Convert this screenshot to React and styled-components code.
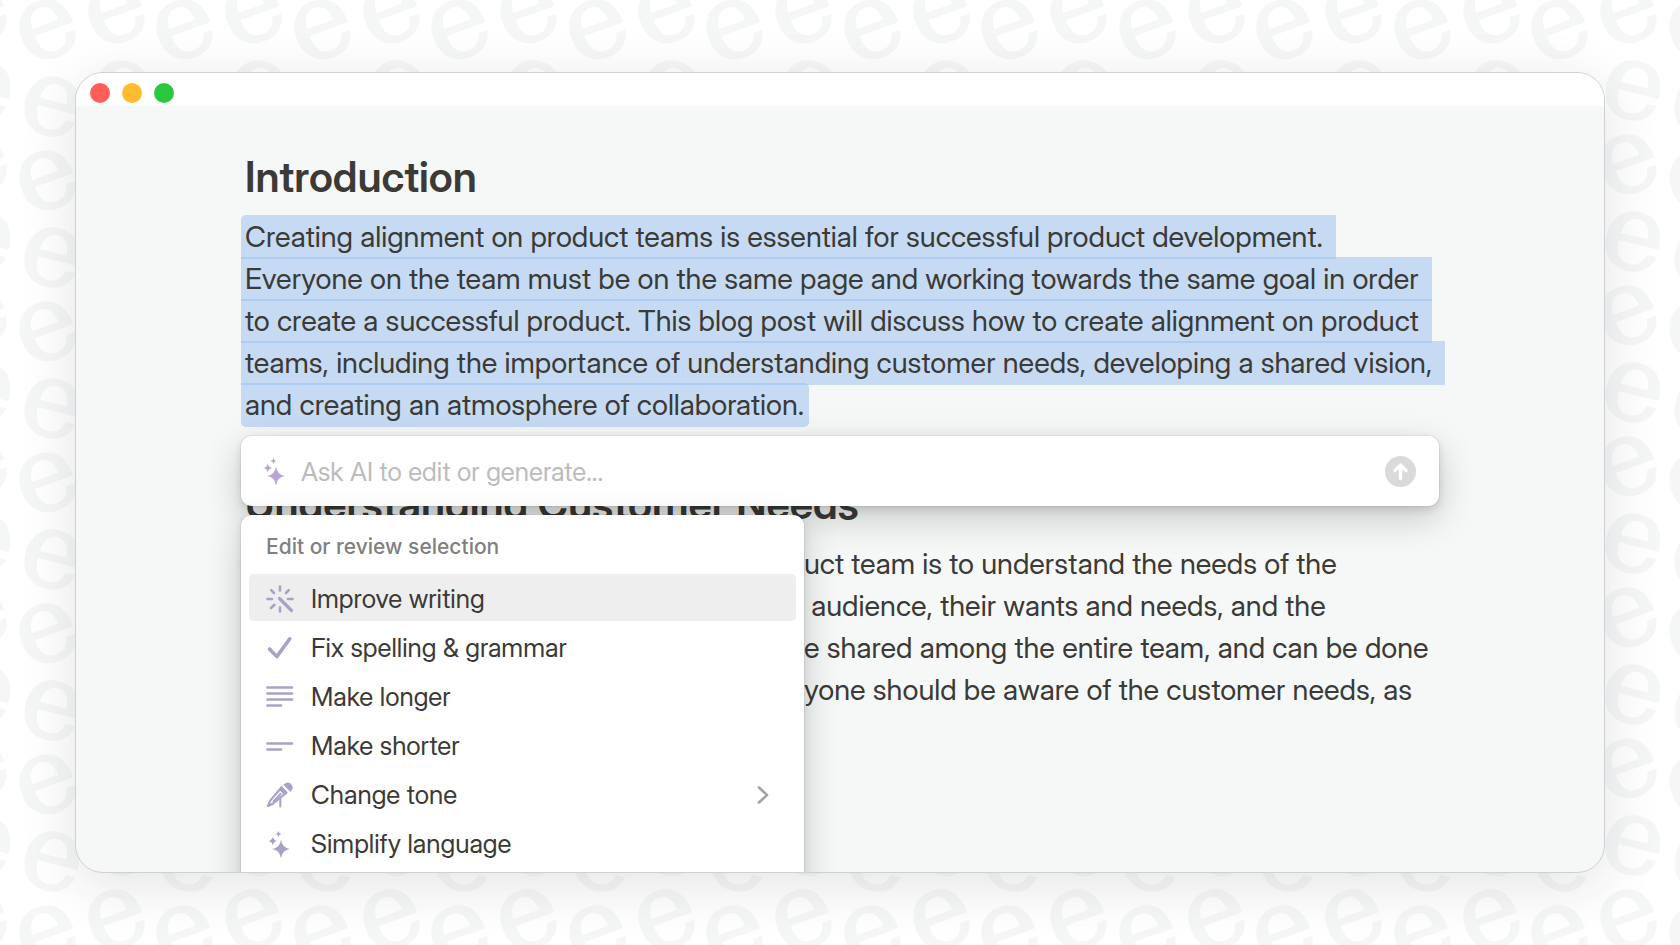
import React, { useState } from "react";
import styled, { createGlobalStyle } from "styled-components";

const fonts = {
  text: `"Inter Display", Inter, "Liberation Sans", sans-serif`,
  label: `Inter, "Liberation Sans", sans-serif`,
};

const colors = {
  text: "#3b3a36",
  muted: "#808080",
  placeholder: "#bcbcbc",
  icon: "#a7a2c6",
  sparkle: "#b8a4d6",
  selection: "rgba(150, 188, 240, 0.5)",
  canvas: "#f6f8f8",
  pattern: "#f5f7f7",
};

const GlobalStyle = createGlobalStyle`
  * {
    box-sizing: border-box;
  }

  body {
    margin: 0;
    background: #fff;
    color: ${colors.text};
    font-family: ${fonts.text};
  }
`;

const Page = styled.div`
  position: relative;
  z-index: 0;
  display: flex;
  height: 100vh;
  padding: 72px 75px;
  overflow: hidden;
`;

const Backdrop = styled.svg`
  position: absolute;
  inset: 0;
  z-index: -1;
  width: 100%;
  height: 100%;

  text {
    fill: ${colors.pattern};
    stroke: ${colors.pattern};
    stroke-width: 2px;
    font-family: "DejaVu Serif", serif;
    font-size: 106px;
    text-anchor: middle;
  }
`;

const Window = styled.div`
  display: flex;
  flex: 1;
  flex-direction: column;
  min-width: 0;
  overflow: hidden;
  border: 1px solid #cfd0d1;
  border-radius: 28px;
  background: ${colors.canvas};
  box-shadow: 0 12px 56px rgba(30, 34, 48, 0.12);
`;

const TitleBar = styled.header`
  display: flex;
  flex-shrink: 0;
  align-items: center;
  gap: 12px;
  height: 33px;
  padding: 6px 14px 0;
  background: #fff;
`;

const Dot = styled.span`
  width: 20px;
  height: 20px;
  border-radius: 50%;
  background: ${props => props.$color};
`;

const Article = styled.main`
  flex: 1;
  min-height: 0;
  padding: 46px 165px 0;
`;

const Title = styled.h2`
  margin: 0;
  padding-left: 4px;
  font-size: 42px;
  font-weight: 600;
  line-height: 50px;
`;

const Selection = styled.p`
  margin: 13px 0 0;
  font-size: 29px;
  line-height: 44px;
`;

const SelectedLine = styled.span`
  display: block;
  width: fit-content;
  padding: 0 13px 0 4px;
  background: ${colors.selection};
  white-space: nowrap;

  & + & {
    margin-top: -2px;
  }

  &:first-child {
    border-top-left-radius: 5px;
  }

  &:last-child {
    padding-right: 5px;
    border-radius: 0 5px 5px 5px;
  }
`;

const Section = styled.section`
  margin-top: 52px;
`;

const Paragraph = styled.p`
  margin: 14px 0 0;
  padding-left: 563px;
  font-size: 29px;
  line-height: 42px;
`;

const TextLine = styled.span`
  display: block;
  white-space: pre;
`;

const Assistant = styled.div`
  position: relative;
  z-index: 1;
  height: 0;
`;

const Popover = styled.div`
  position: absolute;
  top: 9px;
  right: 0;
  left: 0;
  display: flex;
  flex-direction: column;
  gap: 9px;
`;

const Prompt = styled.form`
  display: flex;
  align-items: center;
  gap: 12px;
  height: 70px;
  padding: 0 23px 0 20px;
  border-radius: 11px;
  background: #fff;
  box-shadow: 0 0 0 1px rgba(15, 15, 15, 0.05), 0 4px 8px rgba(15, 15, 15, 0.12), 0 12px 36px rgba(15, 15, 15, 0.2);
`;

const PromptInput = styled.input`
  flex: 1;
  min-width: 0;
  padding: 2px 0 0;
  border: 0;
  outline: 0;
  background: transparent;
  color: ${colors.text};
  font-family: ${fonts.text};
  font-size: 26px;
  line-height: 32px;

  &::placeholder {
    color: ${colors.placeholder};
    opacity: 1;
  }
`;

const SendButton = styled.button`
  display: grid;
  place-items: center;
  width: 31px;
  height: 31px;
  padding: 0;
  border: 0;
  border-radius: 50%;
  background: #dadada;
  color: #fff;
`;

const Menu = styled.div`
  width: 563px;
  padding: 19px 8px 40px;
  border-radius: 11px;
  background: #fff;
  box-shadow: 0 0 0 1px rgba(15, 15, 15, 0.06), 0 4px 8px rgba(15, 15, 15, 0.1), 0 12px 36px rgba(15, 15, 15, 0.2);
`;

const MenuLabel = styled.h3`
  margin: 0 0 14px;
  padding-left: 17px;
  color: ${colors.muted};
  font-family: ${fonts.label};
  font-size: 21px;
  font-weight: 500;
  line-height: 26px;
`;

const MenuList = styled.ul`
  display: grid;
  gap: 2px;
  margin: 0;
  padding: 0;
  list-style: none;
`;

const MenuItem = styled.button`
  display: flex;
  align-items: center;
  gap: 17px;
  width: 100%;
  height: 47px;
  padding: 2px 24px 0 17px;
  border: 0;
  border-radius: 5px;
  background: ${props => (props.$active ? "#eeeeee" : "transparent")};
  color: ${colors.text};
  font-family: ${fonts.text};
  font-size: 26px;
  line-height: 32px;
  text-align: left;
`;

const ItemText = styled.span`
  flex: 1;
`;

const Icon = styled.svg`
  flex-shrink: 0;
  width: 28px;
  height: 28px;
  fill: none;
  stroke: currentColor;
  stroke-width: ${props => props.$weight || 2.6};
  stroke-linecap: round;
  stroke-linejoin: round;
  color: ${props => props.$color || colors.icon};
`;

const Chevron = styled(Icon)`
  width: 16px;
  height: 20px;
`;

const Arrow = styled(Icon)`
  width: 31px;
  height: 31px;
`;

const SparkleIcon = ({ color }) => (
  <Icon viewBox="0 0 28 28" $color={color}>
    <g fill="currentColor" stroke="none">
      <path d="M15 9.5Q16 18 24 19Q16 20 15 28.5Q14 20 6 19Q14 18 15 9.5Z" />
      <path d="M6.8 6.5Q7.4 10.4 11.2 11Q7.4 11.6 6.8 15.5Q6.2 11.6 2.4 11Q6.2 10.4 6.8 6.5Z" />
      <path d="M12.4 1Q12.8 3.6 15.2 4Q12.8 4.4 12.4 7Q12 4.4 9.6 4Q12 3.6 12.4 1Z" />
      <path d="M15 15L19 19L15 23L11 19Z" />
    </g>
  </Icon>
);

const WandIcon = () => (
  <Icon viewBox="0 0 28 28">
    <path d="M14 1.5V5.5M14 22.5V26.5M1.5 14H6M22 14H26.5M5.2 5.2L8 8M22.8 5.2L20 8M5 23L8.4 19.8" />
    <path strokeWidth="3.2" d="M13.5 13.5L25.5 25.5" />
  </Icon>
);

const CheckIcon = () => (
  <Icon viewBox="0 0 28 28" $weight={3.6}>
    <path d="M3.5 15L10.8 22.6L23.8 4.8" />
  </Icon>
);

const LongerIcon = () => (
  <Icon viewBox="0 0 28 28">
    <path d="M1.5 4.5H26M1.5 10.5H26M1.5 16.5H26M1.5 22.5H15" />
  </Icon>
);

const ShorterIcon = () => (
  <Icon viewBox="0 0 28 28">
    <path d="M1.5 11.5H26M1.5 17.5H15" />
  </Icon>
);

const MicIcon = () => (
  <Icon viewBox="0 0 28 28" $weight={2.2}>
    <path d="M15.5 6.5L4.2 19.6L2 25L7.2 22.4L20.2 12" />
    <path d="M15.8 5.6L21.2 11.6L18 13.4L14 9Z" fill="currentColor" strokeWidth="1" />
    <path d="M14.3 16.8V25.4M7.5 20.5L14.8 12.8" strokeWidth="2" />
    <path d="M18.2 3.8Q21.4.6 24.8 3.2Q27.8 6.6 24.6 10.2Z" fill="currentColor" strokeWidth="1" />
  </Icon>
);

const items = [
  { label: "Improve writing", icon: <WandIcon /> },
  { label: "Fix spelling & grammar", icon: <CheckIcon /> },
  { label: "Make longer", icon: <LongerIcon /> },
  { label: "Make shorter", icon: <ShorterIcon /> },
  { label: "Change tone", icon: <MicIcon />, submenu: true },
  { label: "Simplify language", icon: <SparkleIcon /> },
];

const selectedLines = [
  "Creating alignment on product teams is essential for successful product development.",
  "Everyone on the team must be on the same page and working towards the same goal in order",
  "to create a successful product. This blog post will discuss how to create alignment on product",
  "teams, including the importance of understanding customer needs, developing a shared vision,",
  "and creating an atmosphere of collaboration.",
];

// The open menu takes the left part of these lines
const needsLines = [
  "uct team is to understand the needs of the",
  " audience, their wants and needs, and the",
  "e shared among the entire team, and can be done",
  "yone should be aware of the customer needs, as",
];

// Column origins of the repeated letter, every other column sits a little higher
const columns = [
  [-69, -16],
  [0, 0],
  [69, -16],
  [137, 0],
  [206, -16],
];

const Letters = () => (
  <Backdrop aria-hidden="true">
    <defs>
      <pattern id="letters" x="0" y="-40" width="275" height="151" patternUnits="userSpaceOnUse">
        {columns.map(([x, y]) => (
          <g key={x} transform={`translate(${x} ${y})`}>
            <text transform="translate(47 69) rotate(-20)" y="28">e</text>
            <text transform="translate(52 146) rotate(14)" y="28">e</text>
            <text transform="translate(52 -5) rotate(14)" y="28">e</text>
          </g>
        ))}
      </pattern>
    </defs>
    <rect width="100%" height="100%" fill="url(#letters)" />
  </Backdrop>
);

const AiAssistant = () => {
  const [prompt, setPrompt] = useState("");
  const [active, setActive] = useState(0);

  return (
    <Assistant>
      <Popover>
        <Prompt onSubmit={event => event.preventDefault()}>
          <SparkleIcon color={colors.sparkle} />
          <PromptInput
            aria-label="Ask AI"
            placeholder="Ask AI to edit or generate..."
            value={prompt}
            onChange={event => setPrompt(event.target.value)}
          />
          <SendButton type="submit" aria-label="Send">
            <Arrow viewBox="0 0 31 31" $color="#fff" $weight={3.4}>
              <path d="M15.5 22.5V9.5M10 14.5L15.5 9L21 14.5" />
            </Arrow>
          </SendButton>
        </Prompt>
        <Menu>
          <MenuLabel>Edit or review selection</MenuLabel>
          <MenuList>
            {items.map((item, index) => (
              <li key={item.label}>
                <MenuItem type="button" $active={index === active} onMouseEnter={() => setActive(index)}>
                  {item.icon}
                  <ItemText>{item.label}</ItemText>
                  {item.submenu && (
                    <Chevron viewBox="0 0 16 20" $color="#a3a3a3">
                      <path d="M3 2.5L11 10L3 17.5" />
                    </Chevron>
                  )}
                </MenuItem>
              </li>
            ))}
          </MenuList>
        </Menu>
      </Popover>
    </Assistant>
  );
};

const App = () => (
  <>
    <GlobalStyle />
    <Page>
      <Letters />
      <Window>
        <TitleBar>
          <Dot $color="#ff5f57" />
          <Dot $color="#febc2e" />
          <Dot $color="#28c840" />
        </TitleBar>
        <Article>
          <Title>Introduction</Title>
          <Selection>
            {selectedLines.map(line => (
              <SelectedLine key={line}>{line}</SelectedLine>
            ))}
          </Selection>
          <AiAssistant />
          <Section>
            <Title>Understanding Customer Needs</Title>
            <Paragraph>
              {needsLines.map(line => (
                <TextLine key={line}>{line}</TextLine>
              ))}
            </Paragraph>
          </Section>
        </Article>
      </Window>
    </Page>
  </>
);

export default App;
